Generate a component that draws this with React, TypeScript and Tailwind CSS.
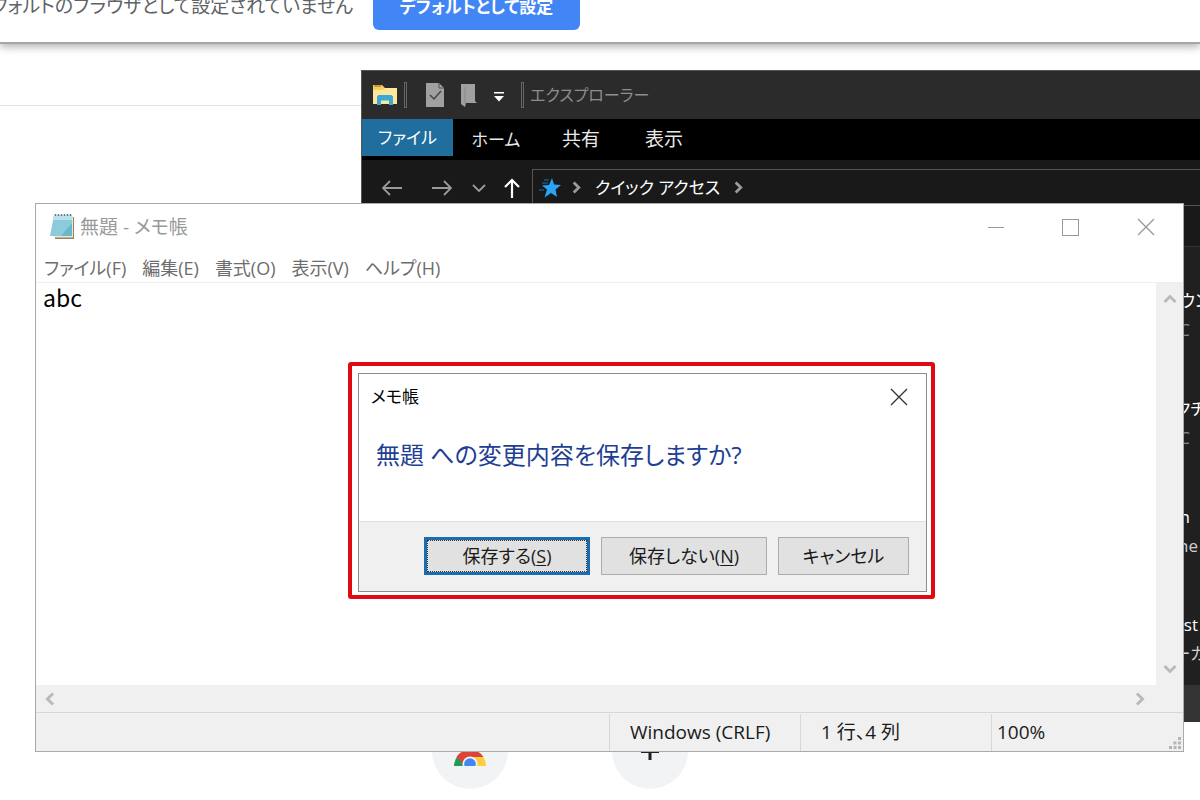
import React from "react";

interface ExplorerGroup {
  title: string;
  titleClass: string;
  detail: string;
  detailClass: string;
}

const explorerGroups: ExplorerGroup[] = [
  { title: "ダウン", titleClass: "text-white", detail: "PC", detailClass: "pr-5 text-[#8a8a8a]" },
  { title: "ピクチ", titleClass: "pr-1 text-white", detail: "PC", detailClass: "pr-5 text-[#8a8a8a]" },
  { title: "n", titleClass: "pr-5 text-white", detail: "ne", detailClass: "pr-3 text-[#d0d0d0]" },
  { title: "st", titleClass: "pr-3 text-white", detail: "ーカ", detailClass: "pr-1 text-[#d0d0d0]" },
];

const menuItems = ["ファイル(F)", "編集(E)", "書式(O)", "表示(V)", "ヘルプ(H)"];

function Chevron({ className }: { className: string }) {
  return (
    <svg viewBox="0 0 14 14" className={className} fill="none" stroke="currentColor" strokeWidth="3">
      <path d="M1.5 10 7 4.5 12.5 10" />
    </svg>
  );
}

function CloseIcon() {
  return (
    <svg viewBox="0 0 18 18" className="size-[18px]" fill="none" stroke="currentColor" strokeWidth="1.3">
      <path d="M1 1 17 17M17 1 1 17" />
    </svg>
  );
}

function FolderIcon() {
  return (
    <svg viewBox="0 0 24 22" className="h-[22px] w-6">
      <path d="M0 1h9l3 3h12v16H0z" fill="#f3cf63" />
      <path d="M1 1h7v2H1z" fill="#c99a2b" />
      <path d="M0 6h10l2-2h12v16H0z" fill="#fde79a" />
      <path d="M4 12.5 5.5 11h13l1.5 1.5V21h-4v-4.5H8V21H4z" fill="#3aa9d8" />
    </svg>
  );
}

function NotepadIcon() {
  return (
    <svg viewBox="0 0 26 28" className="h-7 w-[26px]">
      <path d="M7 4h18v22H6z" fill="#8f8468" />
      <path d="M6 3h18v21.5H5z" fill="#eee7d0" />
      <path d="M5 2h18v21H1z" fill="#8ccbdc" />
      <path d="M5 2h18v5H4z" fill="#b9e2ec" />
      <path d="M12 23 23 10v13z" fill="#6bb6cc" />
      <path d="M6.5 1v2M9.5 1v2M12.5 1v2M15.5 1v2M18.5 1v2M21.5 1v2" stroke="#5f7880" strokeWidth="1.4" />
    </svg>
  );
}

function BrowserPage() {
  return (
    <div>
      {/* Default browser bar, scrolled partly off the top */}
      <div className="-mt-4 h-[60px] border-b-2 border-[#a5a5a5] bg-white shadow-[0_3px_8px_rgba(0,0,0,0.3)]">
        <div className="flex w-[580px] items-start justify-end gap-5">
          <p className="flex h-11 items-center text-[19px] whitespace-nowrap text-[#5f6368]">
            デフォルトのブラウザとして設定されていません
          </p>
          <button className="h-[46px] w-[207px] shrink-0 rounded-md bg-[#4285f4] text-[17px] font-bold whitespace-nowrap text-white">
            デフォルトとして設定
          </button>
        </div>
      </div>
      <div className="h-[62px] border-b border-[#e2e2e2]" />

      {/* New tab shortcuts */}
      <div className="mt-[607px] ml-[432px] flex gap-[104px]">
        <a href="#store" aria-label="Chrome" className="flex size-[76px] flex-col items-center rounded-full bg-[#f1f3f4] pt-[37px]">
          <svg viewBox="0 0 32 16" className="h-4 w-8">
            <path d="M0 16a16 16 0 0 1 4-10.5L10 16z" fill="#1e9b58" />
            <path d="M2.5 7A16 16 0 0 1 29.5 7L16 8.5a8 8 0 0 0-7.5 5z" fill="#db4437" />
            <path d="M16 7h13.5A16 16 0 0 1 32 16h-9z" fill="#ffcd40" />
            <circle cx="16" cy="14" r="7.5" fill="#f1f3f4" />
            <circle cx="16" cy="14" r="5.8" fill="#4285f4" />
          </svg>
        </a>
        <button aria-label="Add" className="flex size-[76px] items-center justify-center rounded-full bg-[#f1f3f4]">
          <svg viewBox="0 0 20 20" className="size-5" stroke="#202124" strokeWidth="3">
            <path d="M1 10.5h18M10 1v18" />
          </svg>
        </button>
      </div>
    </div>
  );
}

function ExplorerWindow() {
  return (
    <section className="absolute top-[70px] right-0 left-[361px] flex h-[652px] flex-col overflow-hidden border-t border-l border-[#555] bg-[#202020] text-[17px]">
      <header className="flex h-12 shrink-0 items-center bg-[#2b2b2b] pl-[11px] text-[#8e8e8e]">
        <FolderIcon />
        <span className="ml-[7px] h-[26px] w-[3px] border border-[#666]" />
        <svg viewBox="0 0 18 24" className="ml-[19px] h-6 w-[18px]">
          <path d="M0 0h13l5 5v19H0z" fill="#a0a0a0" />
          <path d="M13 0v5h5" fill="none" stroke="#555" />
          <path d="m4 12 4 4 7-8" fill="none" stroke="#444" strokeWidth="1.5" />
        </svg>
        <svg viewBox="0 0 16 24" className="ml-[17px] h-6 w-4">
          <path d="M0 1h14v17l2 2H5l-1 4-4-3z" fill="#a0a0a0" />
          <path d="M4 4v17" stroke="#888" />
        </svg>
        <svg viewBox="0 0 12 10" className="mt-1 ml-4 h-[10px] w-3" fill="#fff">
          <path d="M1 0h10v1.5H1zM1 4h10L6 9.5z" />
        </svg>
        <span className="ml-4 h-[26px] w-[3px] border border-[#666]" />
        <span className="ml-[6px] text-[16px]">エクスプローラー</span>
      </header>

      <nav className="flex h-[41px] shrink-0 items-start bg-black text-[#e8e8e8]">
        <button className="h-[37px] w-[91px] bg-[#1f6e9e] text-white">ファイル</button>
        <button className="h-[41px] w-[86px]">ホーム</button>
        <button className="h-[41px] w-[84px] text-[19px]">共有</button>
        <button className="h-[41px] w-[82px] text-[19px]">表示</button>
      </nav>

      <div className="flex h-[87px] shrink-0 items-start border-b border-[#333] bg-[#191919] pt-[9px] pl-5">
        <div className="flex h-[37px] items-center text-[#9a9a9a]">
          <svg viewBox="0 0 20 16" className="h-4 w-5" fill="none" stroke="currentColor" strokeWidth="1.8">
            <path d="M20 8H1M8 1 1 8l7 7" />
          </svg>
          <svg viewBox="0 0 20 16" className="ml-[30px] h-4 w-5" fill="none" stroke="currentColor" strokeWidth="1.8">
            <path d="M0 8h19M12 1l7 7-7 7" />
          </svg>
          <svg viewBox="0 0 14 8" className="ml-5 h-2 w-[14px]" fill="none" stroke="currentColor" strokeWidth="1.8">
            <path d="m1 1 6 6 6-6" />
          </svg>
          <svg viewBox="0 0 16 20" className="ml-[18px] h-5 w-4 text-white" fill="none" stroke="currentColor" strokeWidth="2.2">
            <path d="M8 20V2M1 9l7-7 7 7" />
          </svg>
        </div>
        <div className="ml-3 flex h-[37px] flex-1 items-center border border-r-0 border-[#555] pl-[6px] text-white">
          <svg viewBox="0 0 22 20" className="h-5 w-[22px]">
            <path d="m13 0 2 6.5 7 .5-5.5 4.5 1.5 7.500-6-4-6.500 4.500 2.500-8L3 7.500l7-.5z" fill="#2ba3f7" />
            <path d="M5 2h5M3 5h6M0 12h5" stroke="#1d6fae" strokeWidth="1" />
          </svg>
          <Chevron className="ml-[9px] size-[13px] rotate-90 text-[#9a9a9a]" />
          <span className="ml-3">クイック アクセス</span>
          <Chevron className="ml-3 size-[13px] rotate-90 text-[#9a9a9a]" />
        </div>
      </div>

      <div className="flex-1 pt-[39px]">
        <ul className="-mr-[10px] flex flex-col gap-[50px] text-right leading-[29px] whitespace-nowrap">
          {explorerGroups.map((g) => (
            <li key={g.title}>
              <div className={g.titleClass}>{g.title}</div>
              <div className={g.detailClass}>{g.detail}</div>
            </li>
          ))}
        </ul>
      </div>
      <footer className="h-[37px] shrink-0 bg-[#333]" />
    </section>
  );
}

function NotepadWindow() {
  return (
    <section className="absolute top-[203px] right-4 left-[35px] flex h-[549px] flex-col border border-[#aaa] bg-white">
      <header className="flex h-[46px] shrink-0 items-center pl-[13px] text-[19px] text-[#999]">
        <NotepadIcon />
        <h1 className="ml-[5px] flex-1">無題 - メモ帳</h1>
        <button aria-label="最小化" className="flex h-full w-[75px] items-center justify-center">
          <span className="h-px w-4 bg-[#999]" />
        </button>
        <button aria-label="最大化" className="flex h-full w-[75px] items-center justify-center">
          <span className="size-[17px] border border-[#999]" />
        </button>
        <button aria-label="閉じる" className="flex h-full w-[75px] items-center justify-center">
          <CloseIcon />
        </button>
      </header>

      <nav className="flex h-[33px] shrink-0 items-center gap-4 border-b border-[#eee] pt-1 pl-2 text-[18px] text-[#6d6d6d]">
        {menuItems.map((item) => (
          <button key={item}>{item}</button>
        ))}
      </nav>

      <div className="flex flex-1">
        <textarea
          aria-label="本文"
          defaultValue="abc"
          className="flex-1 resize-none pl-[7px] text-[23px] leading-7 text-black outline-none [font-family:'Noto_Sans_CJK_JP',sans-serif]"
        />
        <div className="flex w-[27px] flex-col items-center justify-between bg-[#f0f0f0] py-[9px] text-[#bababa]">
          <Chevron className="size-[14px]" />
          <Chevron className="size-[14px] rotate-180" />
        </div>
      </div>
      <div className="flex h-[27px] shrink-0 items-center justify-between bg-[#f0f0f0] pr-9 pl-[7px] text-[#bababa]">
        <Chevron className="size-[14px] -rotate-90" />
        <Chevron className="size-[14px] rotate-90" />
      </div>

      <footer className="flex h-[39px] shrink-0 border-t border-[#d7d7d7] bg-[#f0f0f0] pt-px text-[19px] text-[#1a1a1a]">
        <div className="flex-1" />
        <div className="flex w-[191px] items-center border-l border-[#d7d7d7] pl-5">Windows (CRLF)</div>
        <div className="flex w-[191px] items-center border-l border-[#d7d7d7] pl-5">1 行、4 列</div>
        <div className="flex w-[192px] items-center justify-between border-l border-[#d7d7d7] pl-[5px]">
          100%
          <svg viewBox="0 0 12 12" className="mr-[2px] mb-[2px] size-3 self-end" fill="#b5b5b5">
            <path d="M9 0h3v3H9zM9 4.5h3v3H9zM4.5 4.5h3v3h-3zM9 9h3v3H9zM4.5 9h3v3h-3zM0 9h3v3H0z" />
          </svg>
        </div>
      </footer>
    </section>
  );
}

function SaveDialog() {
  return (
    <div className="absolute top-[362px] left-[348px] rounded-[3px] border-4 border-[#e00b12] pt-[7px] pr-1 pb-[3px] pl-[6px]">
      <div role="dialog" aria-labelledby="dialog-title" className="w-[569px] border border-[#8c8c8c] bg-white">
        <div className="flex h-[46px] items-center justify-between pr-[18px] pl-3">
          <h2 id="dialog-title" className="text-[17px] text-black">メモ帳</h2>
          <button aria-label="閉じる" className="text-[#333]">
            <CloseIcon />
          </button>
        </div>
        <p className="h-[101px] pt-[17px] pl-[17px] text-[24px] leading-9 text-[#1f3f94]">
          無題 への変更内容を保存しますか?
        </p>
        <div className="flex h-[70px] items-start justify-end gap-[11px] border-t border-[#dfdfdf] bg-[#f0f0f0] pt-[15px] pr-[17px] text-[18px] text-[#1a1a1a]">
          <button className="h-[38px] w-[166px] border-[3px] border-[#1a6cb0] bg-[#e1e1e1] outline-1 -outline-offset-4 outline-dotted outline-[#333]">
            保存する(<u className="underline-offset-2">S</u>)
          </button>
          <button className="h-[38px] w-[166px] border border-[#adadad] bg-[#e1e1e1]">
            保存しない(<u className="underline-offset-2">N</u>)
          </button>
          <button className="h-[38px] w-[131px] border border-[#adadad] bg-[#e1e1e1]">キャンセル</button>
        </div>
      </div>
    </div>
  );
}

export default function App() {
  return (
    <main className="relative h-screen overflow-hidden bg-white [font-family:'Open_Sans','Noto_Sans_CJK_JP',sans-serif] [font-feature-settings:'palt']">
      <BrowserPage />
      <ExplorerWindow />
      <NotepadWindow />
      <SaveDialog />
    </main>
  );
}
